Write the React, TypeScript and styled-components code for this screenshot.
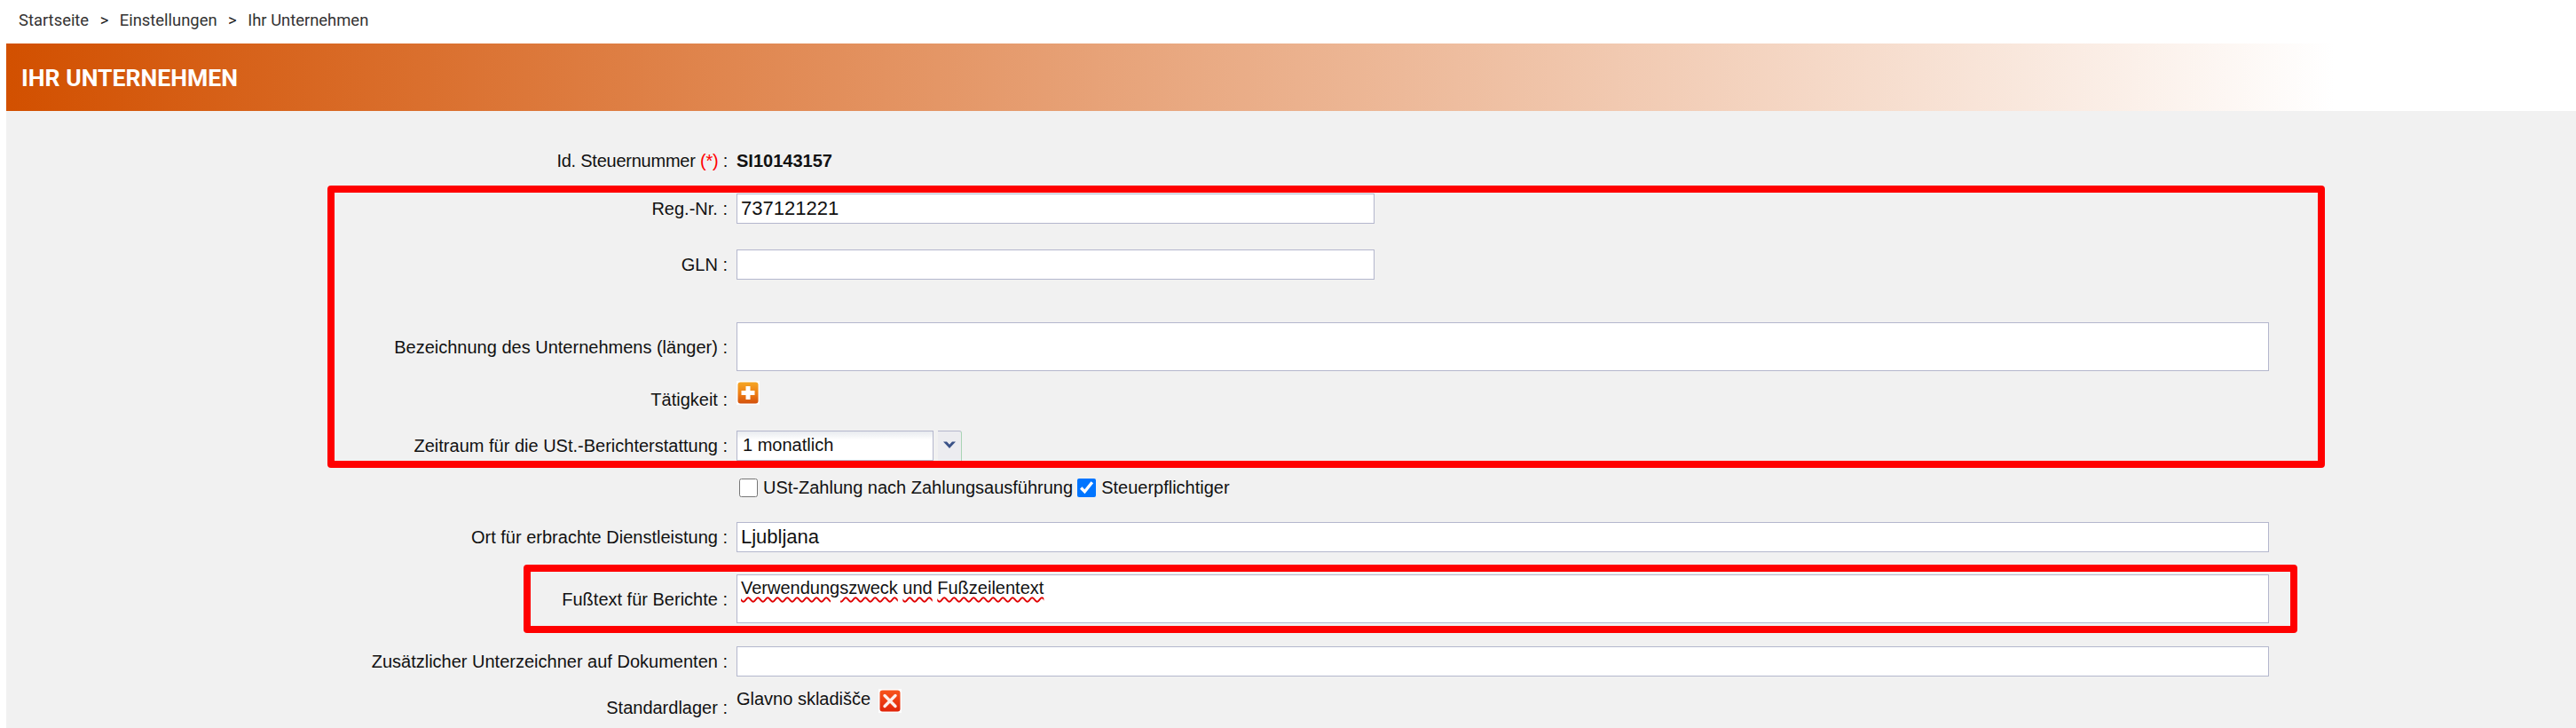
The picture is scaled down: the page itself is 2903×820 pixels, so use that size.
import React from "react";
import styled, { createGlobalStyle } from "styled-components";

const GlobalStyle = createGlobalStyle`
  html, body {
    margin: 0;
    padding: 0;
    background: #fff;
    overflow: hidden;
  }
  * { box-sizing: border-box; }
`;

const Page = styled.div`
  position: relative;
  width: 2903px;
  height: 820px;
  overflow: hidden;
  padding-left: 7px;
  font-family: "Liberation Sans", Arial, sans-serif;
  font-size: 20px;
  color: #111;
`;

const Breadcrumbs = styled.nav`
  height: 49px;
  margin-left: -7px;
  padding: 12px 0 0 21px;
  display: flex;
  align-items: flex-start;
  font-family: Roboto, sans-serif;
  font-size: 18.4px;
  line-height: 22px;
  color: #333;
`;

const Crumb = styled.span``;

const CrumbSep = styled.span`
  margin: 0 12.5px;
  color: #222;
`;

const Banner = styled.header`
  height: 76px;
  display: flex;
  align-items: center;
  padding-left: 17px;
  background: linear-gradient(to right, #d25000, #fff 90.6%);
`;

const Title = styled.h1`
  margin: 0;
  font-family: Roboto, sans-serif;
  font-size: 26.6px;
  font-weight: 700;
  color: #fff;
`;

const Form = styled.main`
  height: 695px;
  padding-top: 43px;
  background: #f1f1f1;
`;

const Row = styled.div<{ $top: number; $height: number; $labelAt?: "center" | "end" }>`
  display: grid;
  grid-template-columns: 813px 1fr;
  column-gap: 10px;
  height: ${(p) => p.$height}px;
  margin-top: ${(p) => p.$top}px;
  align-items: ${(p) => p.$labelAt ?? "center"};
  padding-right: 346px;
`;

const Label = styled.label<{ $drop?: number }>`
  text-align: right;
  white-space: pre;
  line-height: 24px;
  margin-bottom: ${(p) => -(p.$drop ?? 0)}px;
`;

const TightLabel = styled(Label)`
  letter-spacing: -0.24px;
`;

const Required = styled.span`
  color: #f00;
`;

const Strong = styled.span`
  font-weight: 700;
`;

const Input = styled.input<{ $width?: number }>`
  display: block;
  width: ${(p) => (p.$width ? `${p.$width}px` : "100%")};
  height: 34px;
  padding: 0 4px;
  border: 1px solid #b4b7cd;
  border-radius: 0;
  background: #fff;
  font-family: "Liberation Sans", Arial, sans-serif;
  font-size: 22px;
  color: #111;
  outline: none;
`;

const Area = styled.div<{ $height: number }>`
  height: ${(p) => p.$height}px;
  padding: 1px 4px;
  border: 1px solid #b4b7cd;
  background: #fff;
  font-size: 20px;
  line-height: 26px;
  color: #111;
`;

const Misspelt = styled.span`
  text-decoration: underline wavy #e00000 2px;
  text-underline-offset: 3px;
`;

const IconBox = styled.span`
  display: block;
  width: 26px;
  height: 27px;
  background: #fdfdfd;
  padding: 1px;
`;

const IconRow = styled.div`
  display: flex;
  align-items: flex-start;
`;

const SelectBox = styled.div`
  display: flex;
  height: 34px;
  gap: 5px;
`;

const SelectValue = styled.div`
  width: 222px;
  padding: 2px 6px;
  border: 1px solid #b4b7cd;
  background: linear-gradient(to bottom, #e8ebef, #fff 30%);
  line-height: 26px;
`;

const SelectButton = styled.div`
  width: 27px;
  display: flex;
  justify-content: center;
  padding-top: 10px;
  border-top: 1px solid #b4b7cd;
  border-right: 1px solid #a9d4b4;
  border-top-right-radius: 3px;
  background: #ececf0;
`;

const Checks = styled.div`
  display: flex;
  align-items: center;
  padding-left: 3px;
`;

const Check = styled.input`
  width: 21px;
  height: 21px;
  margin: 0;
`;

const CheckText = styled.span`
  margin: 0 5px 0 6px;
`;

const StoreName = styled.span`
  line-height: 22px;
  margin-right: 9px;
`;

const Highlight = styled.div<{ $x: number; $y: number; $w: number; $h: number }>`
  position: absolute;
  left: ${(p) => p.$x}px;
  top: ${(p) => p.$y}px;
  width: ${(p) => p.$w}px;
  height: ${(p) => p.$h}px;
  border: 8px solid #ff0000;
  border-radius: 4px;
  pointer-events: none;
`;

const PlusIcon = () => (
  <svg width="24" height="25" viewBox="0 0 24 25">
    <defs>
      <linearGradient id="plusFill" x1="0" y1="0" x2="0" y2="1">
        <stop offset="0" stopColor="#f5a623" />
        <stop offset="0.55" stopColor="#ee7d14" />
        <stop offset="1" stopColor="#d2500c" />
      </linearGradient>
    </defs>
    <rect x="0.5" y="0.5" width="23" height="24" rx="3" fill="url(#plusFill)" />
    <path d="M9.5 5h5v5h5v5h-5v5h-5v-5h-5v-5h5z" fill="#fff" />
  </svg>
);

const CloseIcon = () => (
  <svg width="24" height="25" viewBox="0 0 24 25">
    <defs>
      <linearGradient id="closeFill" x1="0" y1="0" x2="0" y2="1">
        <stop offset="0" stopColor="#f8541c" />
        <stop offset="1" stopColor="#e0240a" />
      </linearGradient>
    </defs>
    <rect x="0.5" y="0.5" width="23" height="24" rx="3" fill="url(#closeFill)" />
    <path d="M6 6.5l12 12M18 6.5l-12 12" stroke="#fff" strokeWidth="3.4" strokeLinecap="round" opacity="0.92" />
  </svg>
);

const ChevronIcon = () => (
  <svg width="16" height="10" viewBox="0 0 16 10">
    <path d="M1 1.5h4l3 3.2 3-3.2h4L8 9z" fill="#3a5288" />
  </svg>
);

export default function App() {
  return (
    <Page>
      <GlobalStyle />
      <Breadcrumbs>
        <Crumb>Startseite</Crumb>
        <CrumbSep>&gt;</CrumbSep>
        <Crumb>Einstellungen</Crumb>
        <CrumbSep>&gt;</CrumbSep>
        <Crumb>Ihr Unternehmen</Crumb>
      </Breadcrumbs>
      <Banner>
        <Title>IHR UNTERNEHMEN</Title>
      </Banner>
      <Form>
        <Row $top={0} $height={26}>
          <TightLabel>
            Id. Steuernummer <Required>(*)</Required> :
          </TightLabel>
          <Strong>SI10143157</Strong>
        </Row>
        <Row $top={24} $height={34}>
          <Label>Reg.-Nr. :</Label>
          <Input $width={719} defaultValue="737121221" readOnly />
        </Row>
        <Row $top={29} $height={34}>
          <Label>GLN :</Label>
          <Input $width={719} readOnly />
        </Row>
        <Row $top={48} $height={55}>
          <Label>Bezeichnung des Unternehmens (länger) :</Label>
          <Area $height={55} />
        </Row>
        <Row $top={11} $height={27} $labelAt="end">
          <Label $drop={6}>Tätigkeit :</Label>
          <IconRow>
            <IconBox>
              <PlusIcon />
            </IconBox>
          </IconRow>
        </Row>
        <Row $top={29} $height={34}>
          <Label>Zeitraum für die USt.-Berichterstattung :</Label>
          <SelectBox>
            <SelectValue>1 monatlich</SelectValue>
            <SelectButton>
              <ChevronIcon />
            </SelectButton>
          </SelectBox>
        </Row>
        <Row $top={19} $height={21}>
          <span />
          <Checks>
            <Check type="checkbox" readOnly />
            <CheckText>USt-Zahlung nach Zahlungsausführung</CheckText>
            <Check type="checkbox" defaultChecked readOnly />
            <CheckText>Steuerpflichtiger</CheckText>
          </Checks>
        </Row>
        <Row $top={28} $height={35}>
          <Label>Ort für erbrachte Dienstleistung :</Label>
          <Input defaultValue="Ljubljana" readOnly />
        </Row>
        <Row $top={25} $height={55}>
          <Label>Fußtext für Berichte :</Label>
          <Area $height={55}>
            <Misspelt>Verwendungszweck</Misspelt> <Misspelt>und</Misspelt>{" "}
            <Misspelt>Fußzeilentext</Misspelt>
          </Area>
        </Row>
        <Row $top={25} $height={35}>
          <Label>Zusätzlicher Unterzeichner auf Dokumenten :</Label>
          <Input defaultValue="" readOnly />
        </Row>
        <Row $top={14} $height={27} $labelAt="end">
          <Label $drop={6}>Standardlager :</Label>
          <IconRow>
            <StoreName>Glavno skladišče</StoreName>
            <IconBox>
              <CloseIcon />
            </IconBox>
          </IconRow>
        </Row>
      </Form>
      <Highlight $x={369} $y={209} $w={2251} $h={318} />
      <Highlight $x={590} $y={636} $w={1999} $h={77} />
    </Page>
  );
}
